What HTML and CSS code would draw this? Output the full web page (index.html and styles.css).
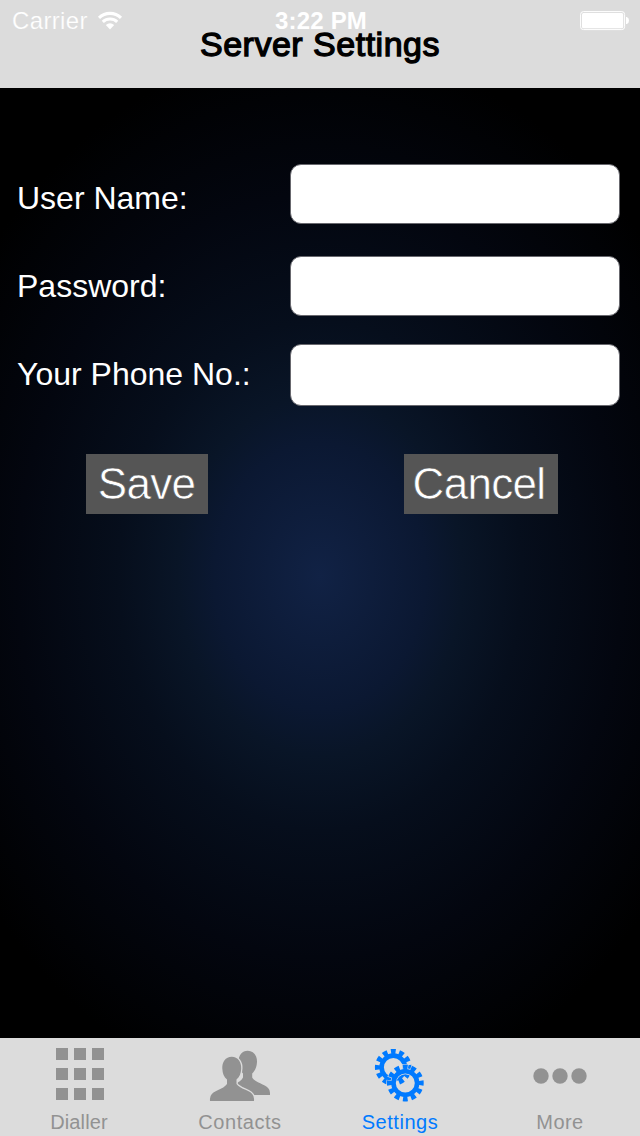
FILE: index.html
```html
<!DOCTYPE html>
<html lang="en">
<head>
<meta charset="utf-8">
<title>Server Settings</title>
<link rel="stylesheet" href="styles.css">
</head>
<body>
<div class="screen">
  <header class="navbar">
    <div class="status">
      <div class="status-left"><span class="carrier">Carrier</span>
        <svg class="wifi" width="26" height="20" viewBox="0 0 26 20"><g fill="none" stroke="#fff" stroke-width="3.1"><path d="M2 6.800A16 16 0 0 1 24 6.800"/><path d="M5.800 10.800A10.700 10.700 0 0 1 20.200 10.800"/></g><path d="M8.800 14.100Q13 10.400 17.200 14.100L13 18.400Z" fill="#fff"/></svg>
      </div>
      <span class="time">3:22 PM</span>
      <svg class="battery" width="50" height="20" viewBox="0 0 50 20"><rect x=".6" y=".6" width="44" height="18" rx="2.800" fill="none" stroke="#fff"/><rect x="2" y="2" width="41.200" height="15.300" rx="1.500" fill="#fff"/><path d="M46 6h.8q2.200.8 2.200 3.500t-2.200 3.500H46z" fill="#fff"/></svg>
    </div>
    <h1 class="title">Server Settings</h1>
  </header>
  <main class="content">
    <form class="form">
      <label class="label user" for="u">User Name:</label><input class="field" id="u" type="text">
      <label class="label" for="p">Password:</label><input class="field" id="p" type="password">
      <label class="label" for="n">Your Phone No.:</label><input class="field tall" id="n" type="tel">
    </form>
    <div class="actions">
      <button class="button save" type="button">Save</button>
      <button class="button cancel" type="button">Cancel</button>
    </div>
  </main>
  <nav class="tabs">
    <a class="tab"><svg class="icon" width="64" height="64" viewBox="48 1042 64 64"><path fill="#929292" d="M56 1048h12v12H56zM74 1048h12v12H74zM92 1048h12v12H92zM56 1068h12v12H56zM74 1068h12v12H74zM92 1068h12v12H92zM56 1088h12v12H56zM74 1088h12v12H74zM92 1088h12v12H92z"/></svg><span class="tab-label dialler">Dialler</span></a>
    <a class="tab"><svg class="icon" width="64" height="64" viewBox="208 1042 64 64"><g fill="#929292"><path d="M247.700 1050.700C253.500 1050.700 257.200 1055.500 257 1062C256.800 1067 255 1071 252.200 1073.500V1077.500C255 1083 267 1084 269.400 1090Q270.200 1092.500 270 1095H246L234 1084Q241 1081.500 243 1077.500V1073.500C240 1071 238.700 1067 238.500 1062C238.300 1055.500 242 1050.700 247.700 1050.700Z"/><path stroke="#dcdcdc" stroke-width="2.600" paint-order="stroke" d="M231.700 1056.800C238 1056.800 241.500 1062.500 241.200 1068.500C241 1073.500 239.500 1077 236.500 1079.500V1084C240 1089.500 251.500 1090 253.400 1096Q254.200 1098.500 254 1101H210Q209.800 1098.500 210.600 1096C212.500 1090.500 223.500 1089.500 227 1084V1079.500C224 1077 222.500 1073.500 222.300 1068.500C222 1062.500 225.500 1056.800 231.700 1056.800Z"/></g></svg><span class="tab-label contacts">Contacts</span></a>
    <a class="tab active"><svg class="icon" width="64" height="64" viewBox="368 1042 64 64"><g fill="none" stroke="#007aff"><circle cx="393.300" cy="1067.300" r="11.700" stroke-width="4.600"/><circle cx="393.300" cy="1067.300" r="15.600" stroke-width="5.600" pathLength="24" stroke-dasharray="1.150 .85" stroke-dashoffset=".575"/><circle cx="405.300" cy="1083" r="11.800" stroke="#dcdcdc" stroke-width="6"/><circle cx="405.300" cy="1083" r="16" stroke="#dcdcdc" stroke-width="6" pathLength="24" stroke-dasharray="1.400 .6" stroke-dashoffset=".7"/><circle cx="405.300" cy="1083" r="11.800" stroke-width="4.600"/><circle cx="405.300" cy="1083" r="15.600" stroke-width="5.600" pathLength="24" stroke-dasharray="1.150 .85" stroke-dashoffset=".575"/></g></svg><span class="tab-label settings">Settings</span></a>
    <a class="tab"><svg class="icon" width="64" height="64" viewBox="528 1042 64 64"><g fill="#929292"><circle cx="541" cy="1076" r="7.700"/><circle cx="560" cy="1076" r="7.700"/><circle cx="579" cy="1076" r="7.700"/></g></svg><span class="tab-label">More</span></a>
  </nav>
</div>
</body>
</html>
```
FILE: styles.css
```css
* { box-sizing: border-box; }
body { margin: 0; font-family: "Liberation Sans", Arial, sans-serif; }
.screen { width: 640px; height: 1136px; display: flex; flex-direction: column; overflow: hidden; background: #000; }
.navbar { position: relative; height: 88px; flex: none; background: #dcdcdc; }
.status { height: 42px; padding: 0 10px 0 12px; display: grid; grid-template-columns: 1fr auto 1fr; align-items: center; color: #fff; font-size: 24px; line-height: 42px; }
.status-left { display: flex; align-items: center; gap: 9px; }
.carrier { letter-spacing: .35px; -webkit-text-stroke: .2px #dcdcdc; }
.time { font-size: 24px; font-weight: bold; letter-spacing: .2px; }
.battery { justify-self: end; }
.title { position: absolute; top: 24px; left: 0; width: 640px; margin: 0; text-align: center; font-size: 34px; line-height: 40px; font-weight: normal; letter-spacing: .5px; color: #000; -webkit-text-stroke: 1.300px #000; }
.content { flex: 1; padding-top: 76px; background: radial-gradient(ellipse 420px 530px at 320px 488px, #112245 0%, #0b1832 25%, #091527 34%, #060e1c 48%, #03060f 72%, #000 100%); }
.form { display: grid; grid-template-columns: 273px 330px; grid-template-rows: 92px 88px 62px; padding-left: 17px; align-items: start; }
.label { color: #fff; font-size: 32px; line-height: 60px; white-space: nowrap; }
.user { padding-top: 4px; }
.field { width: 330px; height: 60px; border: 1px solid #68686e; border-radius: 11px; background: #fff; padding: 0 12px; font-size: 28px; outline: none; }
.field.tall { height: 62px; }
.actions { display: flex; justify-content: space-between; padding: 48px 82px 0 86px; }
.button { height: 60px; padding: 0 1px 1px 0; border: 0; background: #555; color: #fff; font: 44px/58px "Liberation Sans", Arial, sans-serif; letter-spacing: -.7px; -webkit-text-stroke: .6px #555; }
.save { width: 122px; }
.cancel { width: 154px; padding-right: 4px; }
.tabs { height: 98px; flex: none; display: grid; grid-template-columns: repeat(4, 160px); background: #dcdcdc; }
.tab { display: flex; flex-direction: column; align-items: center; padding-top: 4px; color: #929292; }
.active { color: #007aff; }
.icon { display: block; flex: none; }
.tab-label { font-size: 20px; line-height: 24px; margin-top: 4px; letter-spacing: .45px; }
.dialler { letter-spacing: .15px; padding-right: 2px; }
.contacts, .settings { letter-spacing: .55px; }
```
